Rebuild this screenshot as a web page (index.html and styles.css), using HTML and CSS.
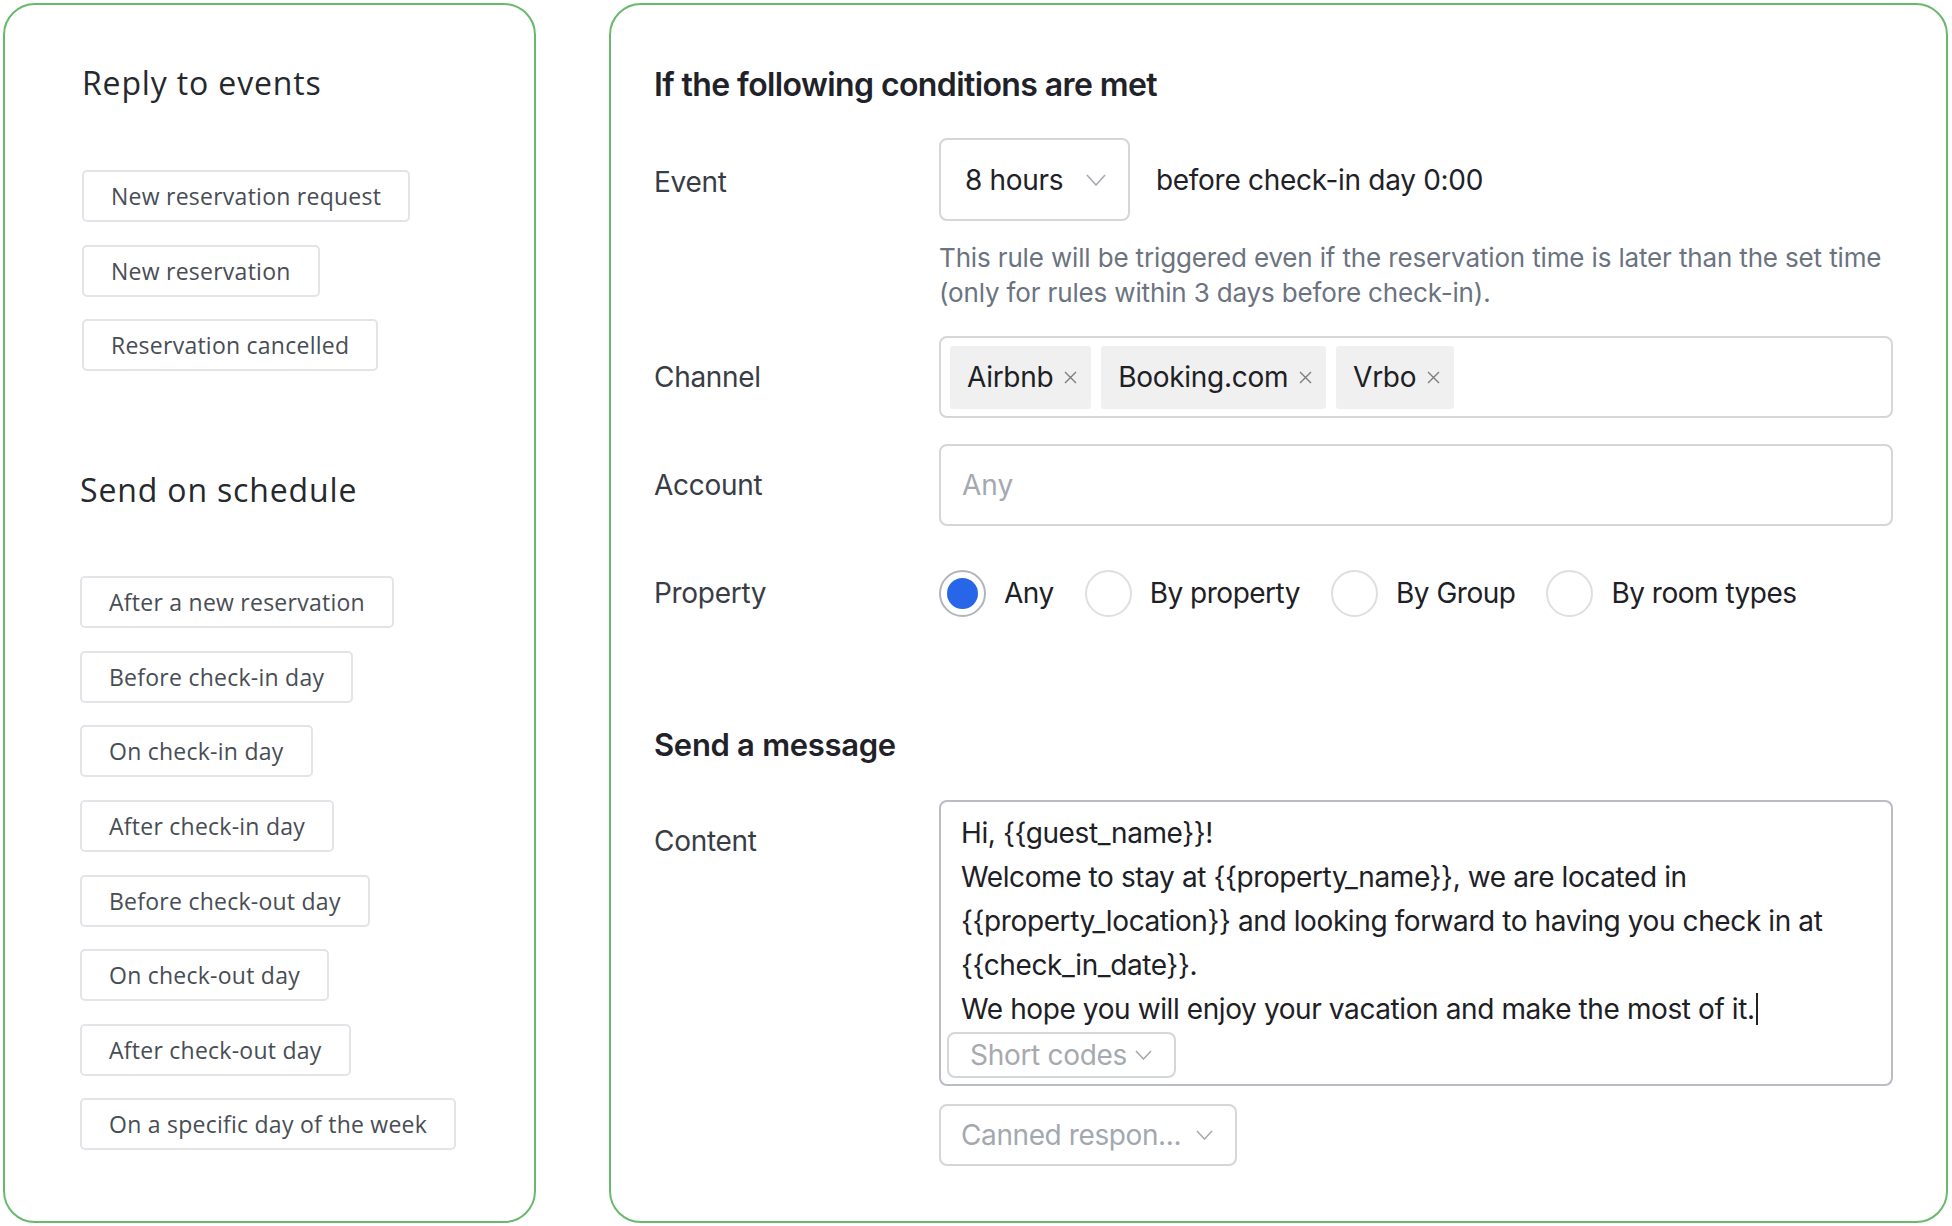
FILE: index.html
```html
<!DOCTYPE html>
<html lang="en">

<head>
    <meta charset="UTF-8">
    <meta name="viewport" content="width=device-width, initial-scale=1.0">
    <title>Auto message rule</title>
    <link rel="stylesheet" href="styles.css">
</head>

<body>
    <div class="page">
        <!-- trigger picker -->
        <aside class="panel triggers">
            <section class="trigger-group events">
                <h2>Reply to events</h2>
                <ul class="trigger-list">
                    <li><button class="trigger">New reservation request</button></li>
                    <li><button class="trigger">New reservation</button></li>
                    <li><button class="trigger">Reservation cancelled</button></li>
                </ul>
            </section>
            <section class="trigger-group schedule">
                <h2>Send on schedule</h2>
                <ul class="trigger-list">
                    <li><button class="trigger">After a new reservation</button></li>
                    <li><button class="trigger">Before check-in day</button></li>
                    <li><button class="trigger">On check-in day</button></li>
                    <li><button class="trigger">After check-in day</button></li>
                    <li><button class="trigger">Before check-out day</button></li>
                    <li><button class="trigger">On check-out day</button></li>
                    <li><button class="trigger">After check-out day</button></li>
                    <li><button class="trigger">On a specific day of the week</button></li>
                </ul>
            </section>
        </aside>

        <!-- rule form -->
        <main class="panel rule">
            <h2 class="rule-title">If the following conditions are met</h2>

            <div class="field field-event">
                <span class="field-label">Event</span>
                <div class="field-control">
                    <div class="event-line">
                        <div class="select select-hours">
                            <span>8 hours</span>
                            <svg class="chevron" width="20" height="12" viewBox="0 0 20 12"><polyline points="1,1 10,11 19,1" /></svg>
                        </div>
                        <span class="event-suffix">before check-in day 0:00</span>
                    </div>
                    <p class="hint">This rule will be triggered even if the reservation time is later than the set time (only for rules within 3 days before check-in).</p>
                </div>
            </div>

            <div class="field">
                <span class="field-label">Channel</span>
                <div class="field-control input tags">
                    <span class="tag">Airbnb <svg class="tag-close" width="13" height="13" viewBox="0 0 13 13"><path d="M1 1L12 12M12 1L1 12" /></svg></span>
                    <span class="tag">Booking.com <svg class="tag-close" width="13" height="13" viewBox="0 0 13 13"><path d="M1 1L12 12M12 1L1 12" /></svg></span>
                    <span class="tag">Vrbo <svg class="tag-close" width="13" height="13" viewBox="0 0 13 13"><path d="M1 1L12 12M12 1L1 12" /></svg></span>
                </div>
            </div>

            <div class="field">
                <span class="field-label">Account</span>
                <div class="field-control input">
                    <span class="placeholder">Any</span>
                </div>
            </div>

            <div class="field field-property">
                <span class="field-label">Property</span>
                <div class="field-control radios">
                    <label class="radio checked"><span class="radio-dot"></span>Any</label>
                    <label class="radio"><span class="radio-dot"></span>By property</label>
                    <label class="radio"><span class="radio-dot"></span>By Group</label>
                    <label class="radio"><span class="radio-dot"></span>By room types</label>
                </div>
            </div>

            <h2 class="rule-title message-title">Send a message</h2>

            <div class="field field-content">
                <span class="field-label">Content</span>
                <div class="field-control">
                    <div class="editor">
                        <div class="editor-text">
                            <p>Hi, {{guest_name}}!</p>
                            <p>Welcome to stay at {{property_name}}, we are located in {{property_location}} and looking forward to having you check in at {{check_in_date}}.</p>
                            <p>We hope you will enjoy your vacation and make the most of it.<span class="caret"></span></p>
                        </div>
                        <button class="short-codes">Short codes
                            <svg class="chevron" width="17" height="10" viewBox="0 0 17 10"><polyline points="1,1 8.5,9 16,1" /></svg>
                        </button>
                    </div>
                    <div class="select select-canned">
                        <span>Canned respon...</span>
                        <svg class="chevron" width="17" height="10" viewBox="0 0 17 10"><polyline points="1,1 8.5,9 16,1" /></svg>
                    </div>
                </div>
            </div>
        </main>
    </div>
</body>

</html>
```

FILE: styles.css
```css
body {
    margin: 0;
    padding: 3px 0 0 3px;
    background-color: white;
}

.page {
    display: flex;
    gap: 73px;
}

.panel {
    box-sizing: border-box;
    height: 1220px;
    border: solid 2px #68b96c;
    border-radius: 32px;
}

/* left column */

.triggers {
    width: 533px;
    padding: 58px 0 0 75px;
    font-family: 'Open Sans', Lato, sans-serif;
}

.trigger-group h2 {
    margin: 0;
    font-size: 32px;
    line-height: 40px;
    font-weight: normal;
    letter-spacing: 0.85px;
    color: #25282d;
}

.events {
    padding-left: 2px;
}

.schedule {
    margin-top: 99px;
}

.trigger-list {
    list-style: none;
    margin: 67px 0 0;
    padding: 0;
    display: flex;
    flex-direction: column;
    align-items: flex-start;
    gap: 22.6px;
}

.schedule .trigger-list {
    margin-top: 66px;
}

.trigger {
    box-sizing: border-box;
    height: 52px;
    padding: 0 27px;
    background: white;
    border: solid 2px #e2e4e8;
    border-radius: 5px;
    font-family: 'Open Sans', Lato, sans-serif;
    font-size: 23px;
    letter-spacing: 0.25px;
    color: #484d55;
}

/* right column */

.rule {
    width: 1339px;
    padding: 60px 0 0 43px;
    font-family: Inter, Roboto, sans-serif;
    color: #1e2228;
}

.rule-title {
    margin: 0;
    font-size: 32px;
    line-height: 40px;
    font-weight: 600;
    letter-spacing: -0.6px;
    color: #1f2329;
}

.field {
    display: grid;
    grid-template-columns: 285px 954px;
    align-items: center;
    margin-top: 26px;
}

.field-label {
    font-size: 28px;
    color: #383d45;
    letter-spacing: -0.3px;
}

.field-event {
    margin-top: 33px;
    align-items: start;
}

.field-event .field-label {
    padding-top: 3px;
    line-height: 83px;
}

.event-line {
    display: flex;
    align-items: center;
    gap: 26px;
    font-size: 28px;
    letter-spacing: -0.3px;
}

.select {
    box-sizing: border-box;
    display: flex;
    align-items: center;
    justify-content: space-between;
    border: solid 2px #d4d6da;
    border-radius: 8px;
}

.select-hours {
    width: 191px;
    height: 83px;
    padding: 0 22px 0 24px;
}

.chevron {
    fill: none;
    stroke: #a3a6ab;
    stroke-width: 1.5;
}

.hint {
    margin: 19px 0 0;
    font-size: 26px;
    line-height: 35px;
    color: #6b7380;
    letter-spacing: -0.15px;
}

.input {
    box-sizing: border-box;
    height: 82px;
    border: solid 2px #d4d6da;
    border-radius: 8px;
    display: flex;
    align-items: center;
    padding: 0 9px;
}

.tags {
    gap: 10px;
}

.tag {
    box-sizing: border-box;
    height: 63px;
    display: flex;
    align-items: center;
    gap: 11px;
    padding: 0 14px 0 17px;
    background-color: #f0f0f0;
    border-radius: 3px;
    font-size: 28px;
    letter-spacing: -0.3px;
    color: #1d2025;
}

.tag-close {
    fill: none;
    stroke: #7c7c7c;
    stroke-width: 1.4;
}

.placeholder {
    padding-left: 12px;
    font-size: 28px;
    color: #a4a9b0;
}

.field-property {
    min-height: 82px;
}

.radios {
    display: flex;
    align-items: center;
    font-size: 28px;
    letter-spacing: -0.5px;
    color: #1d2025;
}

.radio {
    display: flex;
    align-items: center;
    gap: 18px;
    margin-right: 31px;
}

.radio-dot {
    box-sizing: border-box;
    width: 47px;
    height: 47px;
    border: solid 2px #dcdfe3;
    border-radius: 50%;
    display: flex;
    align-items: center;
    justify-content: center;
}

.radio.checked .radio-dot {
    border-color: #b1b5ba;
}

.radio.checked .radio-dot::after {
    content: '';
    width: 31px;
    height: 31px;
    border-radius: 50%;
    background-color: #2766e8;
}

.message-title {
    margin-top: 91px;
    font-size: 31px;
    letter-spacing: -0.3px;
}

.field-content {
    margin-top: 35px;
    align-items: start;
}

.field-content .field-label {
    padding-top: 19px;
    line-height: 44px;
}

.editor {
    box-sizing: border-box;
    height: 286px;
    padding: 9px 6px 6px;
    border: solid 2px #b9bdc3;
    border-radius: 8px;
    display: flex;
    flex-direction: column;
    justify-content: space-between;
    align-items: flex-start;
}

.editor-text {
    padding: 0 14px;
    font-size: 28px;
    line-height: 44px;
    letter-spacing: -0.4px;
    color: #1d2025;
}

.editor-text p {
    margin: 0;
}

.caret {
    display: inline-block;
    width: 2px;
    height: 32px;
    margin-left: 1px;
    vertical-align: -6px;
    background-color: #222;
}

.short-codes {
    box-sizing: border-box;
    height: 46px;
    width: 229px;
    display: flex;
    align-items: center;
    gap: 8px;
    padding: 0 0 0 21px;
    background: white;
    border: solid 2px #d4d6da;
    border-radius: 8px;
    font-family: Inter, Roboto, sans-serif;
    font-size: 28px;
    letter-spacing: -0.3px;
    color: #a6aab0;
}

.select-canned {
    width: 298px;
    height: 62px;
    margin-top: 18px;
    padding: 0 22px 0 20px;
    font-size: 28px;
    letter-spacing: -0.4px;
    color: #a3a8af;
}
```
